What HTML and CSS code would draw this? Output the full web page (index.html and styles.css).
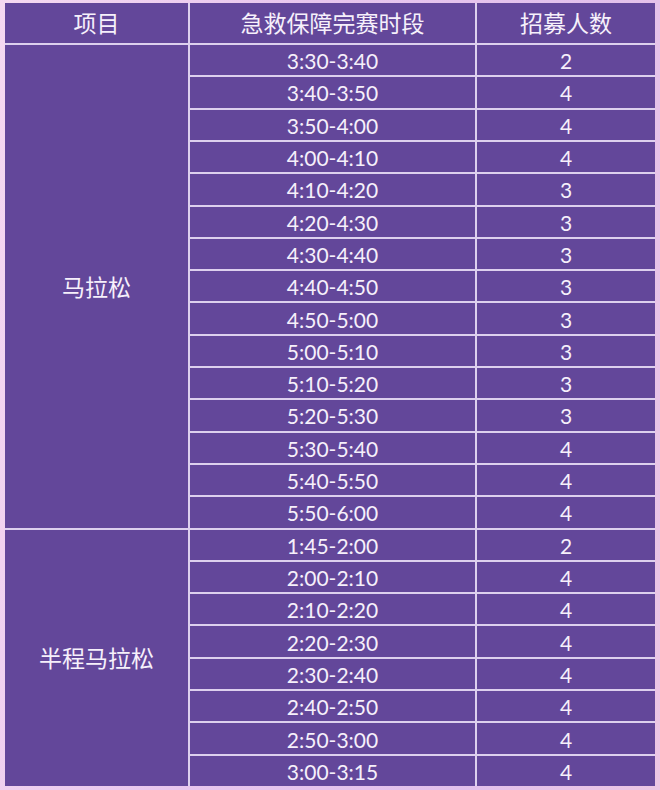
FILE: index.html
```html
<!DOCTYPE html>
<html lang="zh">
<head>
<meta charset="utf-8">
<link rel="stylesheet" href="styles.css">
</head>
<body>
<div class="sheet">
  <div class="cell head">项目</div>
  <div class="cell head">急救保障完赛时段</div>
  <div class="cell head">招募人数</div>

  <div class="cell group g1">马拉松</div>
  <div class="cell num">3:30-3:40</div><div class="cell num">2</div>
  <div class="cell num">3:40-3:50</div><div class="cell num">4</div>
  <div class="cell num">3:50-4:00</div><div class="cell num">4</div>
  <div class="cell num">4:00-4:10</div><div class="cell num">4</div>
  <div class="cell num">4:10-4:20</div><div class="cell num">3</div>
  <div class="cell num">4:20-4:30</div><div class="cell num">3</div>
  <div class="cell num">4:30-4:40</div><div class="cell num">3</div>
  <div class="cell num">4:40-4:50</div><div class="cell num">3</div>
  <div class="cell num">4:50-5:00</div><div class="cell num">3</div>
  <div class="cell num">5:00-5:10</div><div class="cell num">3</div>
  <div class="cell num">5:10-5:20</div><div class="cell num">3</div>
  <div class="cell num">5:20-5:30</div><div class="cell num">3</div>
  <div class="cell num">5:30-5:40</div><div class="cell num">4</div>
  <div class="cell num">5:40-5:50</div><div class="cell num">4</div>
  <div class="cell num">5:50-6:00</div><div class="cell num">4</div>

  <div class="cell group g2">半程马拉松</div>
  <div class="cell num">1:45-2:00</div><div class="cell num">2</div>
  <div class="cell num">2:00-2:10</div><div class="cell num">4</div>
  <div class="cell num">2:10-2:20</div><div class="cell num">4</div>
  <div class="cell num">2:20-2:30</div><div class="cell num">4</div>
  <div class="cell num">2:30-2:40</div><div class="cell num">4</div>
  <div class="cell num">2:40-2:50</div><div class="cell num">4</div>
  <div class="cell num">2:50-3:00</div><div class="cell num">4</div>
  <div class="cell num">3:00-3:15</div><div class="cell num">4</div>
</div>
</body>
</html>
```
FILE: styles.css
```css
html, body {
  margin: 0;
  padding: 0;
}
body {
  width: 660px;
  height: 790px;
  overflow: hidden;
  background: linear-gradient(100deg, #f5d9f1 0%, #e8c6ee 40%, #e2c0ec 75%, #ecc6e4 100%);
  font-family: Lato, "Noto Sans CJK SC", sans-serif;
  color: #f6f0fb;
}
.sheet {
  margin: 3px 0 0 5px;
  width: 650px;
  height: 783px;
  display: grid;
  grid-template-columns: 183px 285px 178px;
  grid-template-rows: 40px repeat(23, 1fr);
  gap: 2px;
  background: #ddd0ee;
}
.cell {
  background: #63479a;
  display: flex;
  align-items: center;
  justify-content: center;
  line-height: 1;
}
.head {
  font-family: "Noto Sans CJK SC", sans-serif;
  font-size: 23px;
  padding-bottom: 2px;
}
.group {
  grid-column: 1;
  font-family: "Noto Sans CJK SC", sans-serif;
  font-size: 23px;
}
.g1 { grid-row: 2 / span 15; }
.g2 { grid-row: 17 / span 8; }
.num {
  font-size: 21px;
  padding-top: 1px;
}
```
